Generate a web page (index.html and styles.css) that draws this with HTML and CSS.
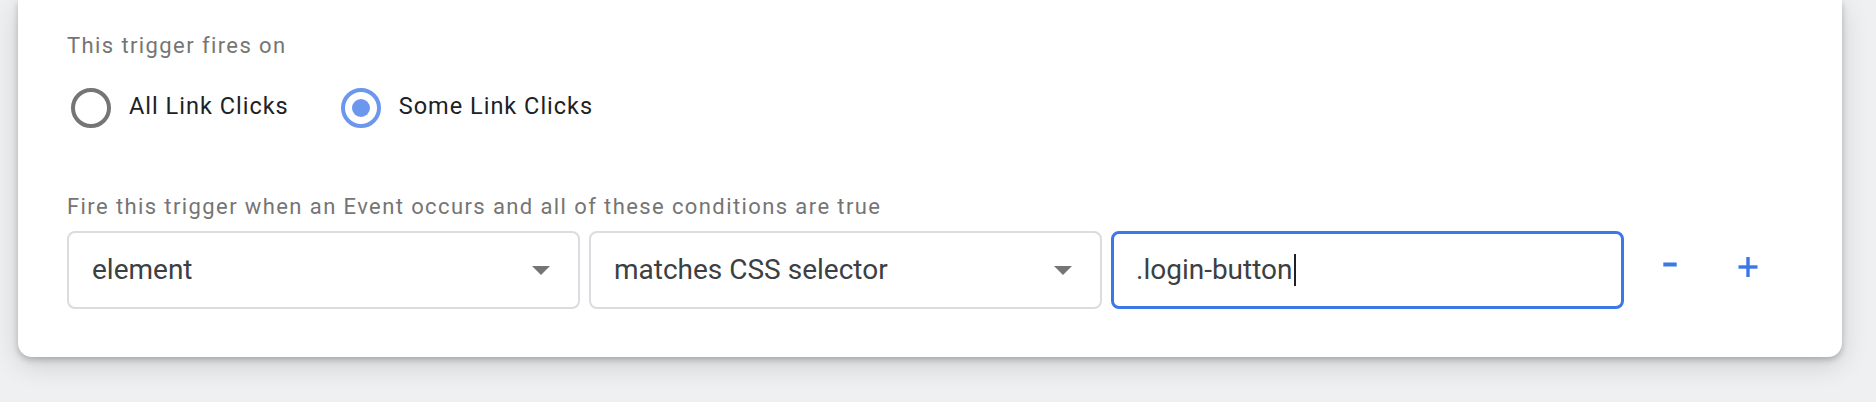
FILE: index.html
```html
<!DOCTYPE html>
<html lang="en">
<head>
<meta charset="utf-8">
<title>Trigger configuration</title>
<link rel="stylesheet" href="styles.css">
</head>
<body>
<div class="card">
  <div class="field-label">This trigger fires on</div>
  <div class="radio-group">
    <label class="radio">
      <span class="radio-circle"></span>
      <span class="radio-text">All Link Clicks</span>
    </label>
    <label class="radio checked">
      <span class="radio-circle"><span class="radio-dot"></span></span>
      <span class="radio-text">Some Link Clicks</span>
    </label>
  </div>
  <div class="field-label cond-label">Fire this trigger when an Event occurs and all of these conditions are true</div>
  <div class="cond-row">
    <div class="select">
      <span class="select-value">element</span>
      <span class="caret"></span>
    </div>
    <div class="select">
      <span class="select-value">matches CSS selector</span>
      <span class="caret"></span>
    </div>
    <div class="text-input">
      <span class="input-value">.login-button</span><span class="cursor"></span>
    </div>
    <button class="icon-btn minus" aria-label="Remove condition">
      <svg width="14" height="5" viewBox="0 0 14 5"><rect x="0.3" y="0.5" width="13.4" height="4" fill="#3b78e7"/></svg>
    </button>
    <button class="icon-btn plus" aria-label="Add condition">
      <svg width="20" height="20" viewBox="0 0 20 20"><rect x="0.5" y="8.3" width="19" height="3.4" fill="#3b78e7"/><rect x="8.3" y="0" width="3.4" height="20" fill="#3b78e7"/></svg>
    </button>
  </div>
</div>
</body>
</html>
```
FILE: styles.css
```css
* { box-sizing: border-box; }

html, body {
  margin: 0;
  padding: 0;
}

body {
  background: #eff0f2;
  font-family: Roboto, "Noto Sans", Arial, sans-serif;
  height: 402px;
  overflow: hidden;
}

.card {
  margin: 0 34px 0 18px;
  background: #ffffff;
  border-radius: 0 0 14px 14px;
  padding: 34px 0 48px 49px;
  box-shadow: 0 3px 6px rgba(0, 0, 0, 0.22), 0 8px 28px rgba(0, 0, 0, 0.14);
}

.field-label {
  font-size: 22px;
  line-height: 24px;
  letter-spacing: 1.4px;
  color: #757575;
}

.radio-group {
  display: flex;
  align-items: flex-start;
  gap: 52px;
  padding-left: 4px;
  margin-top: 30px;
}

.radio {
  display: flex;
  align-items: flex-start;
  gap: 18px;
  cursor: pointer;
}

.radio-circle {
  width: 40px;
  height: 40px;
  border: 4px solid #757575;
  border-radius: 50%;
  display: flex;
  align-items: center;
  justify-content: center;
  flex: none;
}

.radio.checked .radio-circle {
  border-color: #6b97ef;
}

.radio-dot {
  width: 18px;
  height: 18px;
  border-radius: 50%;
  background: #6b97ef;
}

.radio-text {
  font-size: 23.5px;
  line-height: 36px;
  letter-spacing: 1px;
  color: #202124;
}

.cond-label {
  margin-top: 67px;
}

.cond-row {
  display: flex;
  align-items: center;
  margin-top: 12px;
}

.select,
.text-input {
  width: 513px;
  height: 78px;
  border-radius: 8px;
  display: flex;
  align-items: center;
  font-size: 28px;
  line-height: 32px;
  color: #3c4043;
}

.select {
  border: 2px solid #dadce0;
  padding: 0 28px 0 23px;
  justify-content: space-between;
  margin-right: 9px;
}

.text-input {
  border: 3px solid #3b78e7;
  padding: 0 22px;
}

.caret {
  width: 0;
  height: 0;
  border-left: 9px solid transparent;
  border-right: 9px solid transparent;
  border-top: 9px solid #757575;
}

.cursor {
  display: inline-block;
  width: 2px;
  height: 32px;
  background: #202124;
  margin-left: 1px;
}

.icon-btn {
  width: 40px;
  height: 40px;
  border: none;
  background: transparent;
  padding: 0;
  display: flex;
  align-items: center;
  justify-content: center;
  cursor: pointer;
}

.icon-btn.minus {
  margin-left: 26px;
  margin-top: -11px;
}

.icon-btn.plus {
  margin-left: 38px;
  margin-top: -7px;
}
```
